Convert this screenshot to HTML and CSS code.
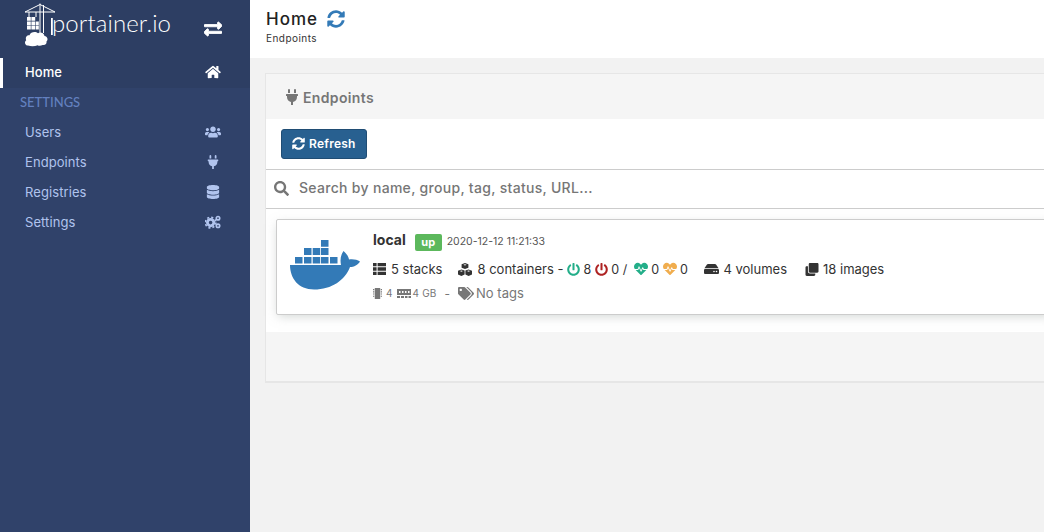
FILE: index.html
```html
<!DOCTYPE html>
<html lang="en">
<head>
<meta charset="utf-8">
<title>Portainer</title>
<link rel="stylesheet" href="styles.css">
</head>
<body>
<svg class="sprite" xmlns="http://www.w3.org/2000/svg">
  <symbol id="i-sync" viewBox="0 0 512 512"><path d="M370.72 133.28C339.458 104.008 298.888 87.962 255.848 88c-77.458.068-144.328 53.178-162.791 126.85-1.344 5.363-6.122 9.15-11.651 9.15H24.103c-7.498 0-13.194-6.807-11.807-14.176C33.933 94.924 134.813 8 256 8c66.448 0 126.791 26.136 171.315 68.685L463.03 40.97C478.149 25.851 504 36.559 504 57.941V192c0 13.255-10.745 24-24 24H345.941c-21.382 0-32.09-25.851-16.971-40.971l41.75-41.749zM32 296h134.059c21.382 0 32.09 25.851 16.971 40.971l-41.75 41.75c31.262 29.273 71.835 45.319 114.876 45.28 77.418-.07 144.315-53.144 162.787-126.849 1.344-5.363 6.122-9.15 11.651-9.15h57.304c7.498 0 13.194 6.807 11.807 14.176C478.067 417.076 377.187 504 256 504c-66.448 0-126.791-26.136-171.315-68.685L48.97 471.03C33.851 486.149 8 475.441 8 454.059V320c0-13.255 10.745-24 24-24z"/></symbol>
  <symbol id="i-search" viewBox="0 0 512 512"><path d="M505 442.7L405.3 343c-4.5-4.5-10.6-7-17-7H372c27.6-35.3 44-79.7 44-128C416 93.1 322.9 0 208 0S0 93.1 0 208s93.1 208 208 208c48.3 0 92.7-16.4 128-44v16.3c0 6.4 2.5 12.5 7 17l99.7 99.7c9.4 9.4 24.6 9.4 33.9 0l28.3-28.3c9.4-9.4 9.4-24.6.1-34zM208 336c-70.7 0-128-57.2-128-128 0-70.7 57.2-128 128-128 70.7 0 128 57.2 128 128 0 70.7-57.2 128-128 128z"/></symbol>
  <symbol id="i-home" viewBox="0 0 576 512"><path d="M280.37 148.26L96 300.11V464a16 16 0 0 0 16 16l112.06-.29a16 16 0 0 0 15.92-16V368a16 16 0 0 1 16-16h64a16 16 0 0 1 16 16v95.64a16 16 0 0 0 16 16.05L464 480a16 16 0 0 0 16-16V300L295.67 148.26a12.19 12.19 0 0 0-15.3 0zM571.6 251.47L488 182.56V44.05a12 12 0 0 0-12-12h-56a12 12 0 0 0-12 12v72.61L318.47 43a48 48 0 0 0-61 0L4.34 251.47a12 12 0 0 0-1.6 16.9l25.5 31A12 12 0 0 0 45.15 301l235.22-193.74a12.19 12.19 0 0 1 15.3 0L530.9 301a12 12 0 0 0 16.9-1.6l25.5-31a12 12 0 0 0-1.7-16.93z"/></symbol>
  <symbol id="i-plug" viewBox="0 0 384 512"><path d="M320,32a32,32,0,0,0-64,0v96h64Zm48,128H16A16,16,0,0,0,0,176v32a16,16,0,0,0,16,16H32v32A160.07,160.07,0,0,0,160,412.8V512h64V412.8A160.07,160.07,0,0,0,352,256V224h16a16,16,0,0,0,16-16V176A16,16,0,0,0,368,160ZM128,32a32,32,0,0,0-64,0v96h64Z"/></symbol>
  <symbol id="i-db" viewBox="0 0 448 512"><path d="M448 73.143v45.714C448 159.143 347.667 192 224 192S0 159.143 0 118.857V73.143C0 32.857 100.333 0 224 0s224 32.857 224 73.143zM448 176v102.857C448 319.143 347.667 352 224 352S0 319.143 0 278.857V176c48.125 33.143 136.208 48.572 224 48.572S399.874 209.143 448 176zm0 160v102.857C448 479.143 347.667 512 224 512S0 479.143 0 438.857V336c48.125 33.143 136.208 48.572 224 48.572S399.874 369.143 448 336z"/></symbol>
  <symbol id="i-users" viewBox="0 0 640 512"><path d="M96 224c35.3 0 64-28.7 64-64s-28.7-64-64-64-64 28.7-64 64 28.7 64 64 64zm448 0c35.3 0 64-28.7 64-64s-28.7-64-64-64-64 28.7-64 64 28.7 64 64 64zm32 32h-64c-17.6 0-33.5 7.1-45.1 18.6 40.3 22.1 68.9 62 75.1 109.4h66c17.7 0 32-14.3 32-32v-32c0-35.3-28.7-64-64-64zm-256 0c61.9 0 112-50.1 112-112S381.9 32 320 32 208 82.1 208 144s50.1 112 112 112zm76.8 32h-8.3c-20.8 10-43.9 16-68.5 16s-47.6-6-68.5-16h-8.3C179.6 288 128 339.6 128 403.2V432c0 26.5 21.5 48 48 48h288c26.5 0 48-21.5 48-48v-28.8c0-63.6-51.6-115.2-115.2-115.2zm-223.7-13.4C161.5 263.1 145.6 256 128 256H64c-35.3 0-64 28.7-64 64v32c0 17.7 14.3 32 32 32h65.9c6.3-47.4 34.9-87.3 75.2-109.4z"/></symbol>
  <symbol id="i-exchange" viewBox="0 0 512 512"><path d="M0 168v-16c0-13.255 10.745-24 24-24h360V80c0-21.367 25.899-32.042 40.971-16.971l80 80c9.372 9.373 9.372 24.569 0 33.941l-80 80C409.956 271.982 384 261.456 384 240v-48H24c-13.255 0-24-10.745-24-24zm488 152H128v-48c0-21.314-25.862-32.08-40.971-16.971l-80 80c-9.372 9.373-9.372 24.569 0 33.941l80 80C102.057 463.997 128 453.437 128 432v-48h360c13.255 0 24-10.745 24-24v-16c0-13.255-10.745-24-24-24z"/></symbol>
  <symbol id="i-cogs" viewBox="0 0 16 14">
    <circle cx="5.6" cy="7.6" r="3.2" fill="none" stroke="currentColor" stroke-width="2.800"/>
    <circle cx="5.6" cy="7.6" r="5.3" fill="none" stroke="currentColor" stroke-width="1.600" stroke-dasharray="2.100 2.060"/>
    <circle cx="13" cy="3.2" r="1.700" fill="none" stroke="currentColor" stroke-width="1.700"/>
    <circle cx="13" cy="10.800" r="1.700" fill="none" stroke="currentColor" stroke-width="1.700"/>
  </symbol>
  <symbol id="i-list" viewBox="0 0 13 12"><path d="M0 0h3.6v3.3H0zM4.6 0H13v3.3H4.6zM0 4.3h3.6v3.4H0zM4.6 4.3H13v3.4H4.6zM0 8.7h3.6V12H0zM4.6 8.7H13V12H4.6z"/></symbol>
  <symbol id="i-cubes" viewBox="0 0 14 13"><path d="M7 0l3.4 1.3v3.5L7 6.1 3.6 4.8V1.3zM7 1.2L5.4 1.8 7 2.4l1.6-.6zM3.4 6.4l3.2 1.2v3.9l-3.2 1.4L0 11.5V7.700zM3.4 7.500l-1.6.6 1.6.6 1.6-.6zM10.600 6.400L14 7.700v3.800l-3.400 1.400-3.200-1.400V7.600zM10.600 7.500L9 8.100l1.600.6 1.600-.6z"/></symbol>
  <symbol id="i-power" viewBox="0 0 512 512"><path d="M400 54.1c63 45 104 118.6 104 201.9 0 136.8-110.8 247.7-247.5 248C120 504.3 8.2 393 8 256.4 7.9 173.1 48.9 99.3 111.8 54.2c11.7-8.3 28-4.8 35 7.7L162.6 90c5.9 10.5 3.1 23.8-6.6 31-41.5 30.8-68 79.6-68 134.9-.1 92.3 74.5 168.1 168 168.1 91.6 0 168.6-74.2 168-169.1-.3-51.8-24.7-101.8-68.1-134-9.7-7.2-12.4-20.5-6.5-30.9l15.8-28.1c7-12.4 23.2-16.1 34.8-7.8zM296 264V24c0-13.3-10.7-24-24-24h-32c-13.3 0-24 10.7-24 24v240c0 13.3 10.7 24 24 24h32c13.3 0 24-10.7 24-24z"/></symbol>
  <symbol id="i-heart" viewBox="0 0 512 512"><path d="M320.2 243.8l-49.7 99.4c-6 12.1-23.4 11.7-28.9-.6l-56.9-126.3-30 71.7H60.6l182.5 186.5c7.1 7.3 18.6 7.3 25.7 0L451.4 288H342.3l-22.1-44.2zM473.7 73.9l-2.4-2.5c-51.5-52.6-135.8-52.6-187.4 0L256 100l-27.9-28.5c-51.5-52.7-135.9-52.7-187.4 0l-2.4 2.4C-10.4 123.7-12.5 203 31 256h102.4l35.9-86.2c5.4-12.9 23.6-13.2 29.4-.4l58.2 129.3 49-97.9c5.9-11.8 22.7-11.8 28.6 0l27.6 55.2H481c43.5-53 41.4-132.3-7.3-182.1z"/></symbol>
  <symbol id="i-hdd" viewBox="0 0 576 512"><path d="M576 304v96c0 26.51-21.49 48-48 48H48c-26.51 0-48-21.49-48-48v-96c0-26.51 21.49-48 48-48h480c26.51 0 48 21.49 48 48zm-48-80a79.557 79.557 0 0 1 30.777 6.165L462.25 85.374A48.003 48.003 0 0 0 422.311 64H153.689a48 48 0 0 0-39.938 21.374L17.223 230.165A79.557 79.557 0 0 1 48 224h480zm-48 96c-17.673 0-32 14.327-32 32s14.327 32 32 32 32-14.327 32-32-14.327-32-32-32zm-96 0c-17.673 0-32 14.327-32 32s14.327 32 32 32 32-14.327 32-32-14.327-32-32-32z"/></symbol>
  <symbol id="i-clone" viewBox="0 0 512 512"><path d="M464 0c26.51 0 48 21.49 48 48v288c0 26.51-21.49 48-48 48H176c-26.51 0-48-21.49-48-48V48c0-26.51 21.49-48 48-48h288M176 416c-44.112 0-80-35.888-80-80V128H48c-26.51 0-48 21.49-48 48v288c0 26.51 21.49 48 48 48h288c26.51 0 48-21.49 48-48v-48H176z"/></symbol>
  <symbol id="i-tags" viewBox="0 0 640 512"><path d="M497.941 225.941L286.059 14.059A48 48 0 0 0 252.118 0H48C21.49 0 0 21.49 0 48v204.118a48 48 0 0 0 14.059 33.941l211.882 211.882c18.744 18.745 49.136 18.746 67.882 0l204.118-204.118c18.745-18.745 18.745-49.137 0-67.882zM112 160c-26.51 0-48-21.49-48-48s21.49-48 48-48 48 21.49 48 48-21.49 48-48 48zm513.941 133.823L421.823 497.941c-18.745 18.745-49.137 18.745-67.882 0l-.36-.36L527.64 323.522c16.999-16.999 26.36-39.6 26.36-63.64s-9.362-46.641-26.36-63.64L331.397 0h48.721a48 48 0 0 1 33.941 14.059l211.882 211.882c18.745 18.745 18.745 49.137 0 67.882z"/></symbol>
  <symbol id="i-chip" viewBox="0 0 10 12"><path d="M2 0h6v12H2zM0 1h1.4v1H0zM0 3h1.4v1H0zM0 5h1.4v1H0zM0 7h1.4v1H0zM0 9h1.4v1H0zM8.6 1H10v1H8.6zM8.6 3H10v1H8.6zM8.6 5H10v1H8.6zM8.6 7H10v1H8.6zM8.6 9H10v1H8.6z"/></symbol>
  <symbol id="i-mem" viewBox="0 0 14 9"><path d="M0 0h14v6H0zM0 7h3v2H0zM4 7h3v2H4zM8 7h2.500v2H8zM11.500 7H14v2h-2.500z"/><path fill="#fff" d="M2 2h1.500v2H2zM5 2h1.500v2H5zM8 2h1.500v2H8zM11 2h1.500v2H11z"/></symbol>
</svg>

<div class="app">
  <aside class="sidebar">
    <div class="top">
      <div class="brand">
        <div class="logo">
          <svg class="logo-mark" viewBox="0 0 30 46" aria-hidden="true">
            <path class="logo-line" d="M0 12L15 4.500L30 12M0 12H30M15 3.500V33M18.500 5V33"/>
            <path class="logo-line" d="M4 12V17M11 12V17"/>
            <path class="logo-fill" d="M2 17h3.800v3.800H2zM6.400 17h3.800v3.800H6.400zM2 21.400h3.800v3.800H2zM6.400 21.400h3.800v3.800H6.400zM10.800 21.400h3v3.800h-3zM2 25.800h3.800v3.800H2zM6.400 25.800h3.800v3.800H6.400zM10.800 25.800h3v3.800h-3z"/>
            <path class="logo-fill" d="M26 18h1.800v17H26z"/>
            <path class="logo-fill" d="M3 45.500c-3 0-4-3.500-1.800-5.300-1.200-3 .8-5.600 3.300-4.900 1-3.300 6-4.300 8.500-2 2-1.500 6-.5 6.500 2.700 3 .2 4 4 2 5.500.5 2.300-1.500 4.100-3.800 3.500-2 1-4 1-5 .2-3 1.200-6.700 1.200-9.700.3z"/>
          </svg>
          <span class="logo-text">portainer.io</span>
        </div>
        <svg class="icon toggle"><use href="#i-exchange"/></svg>
      </div>
      <a class="nav-item active"><span>Home</span><svg class="icon nav-icon home-icon"><use href="#i-home"/></svg></a>
    </div>
    <div class="nav-title">SETTINGS</div>
    <a class="nav-item"><span>Users</span><svg class="icon nav-icon"><use href="#i-users"/></svg></a>
    <a class="nav-item"><span>Endpoints</span><svg class="icon nav-icon"><use href="#i-plug"/></svg></a>
    <a class="nav-item"><span>Registries</span><svg class="icon nav-icon"><use href="#i-db"/></svg></a>
    <a class="nav-item"><span>Settings</span><svg class="icon nav-icon"><use href="#i-cogs"/></svg></a>
  </aside>

  <main class="main">
    <header class="page-header">
      <div class="page-title">Home <svg class="icon title-sync"><use href="#i-sync"/></svg></div>
      <div class="breadcrumb">Endpoints</div>
    </header>

    <section class="widget">
      <div class="widget-head"><svg class="icon head-plug"><use href="#i-plug"/></svg>Endpoints</div>
      <div class="widget-body">
        <div class="toolbar"><button class="btn"><svg class="icon btn-sync"><use href="#i-sync"/></svg>Refresh</button></div>
        <div class="searchbar"><svg class="icon search-icon"><use href="#i-search"/></svg><span>Search by name, group, tag, status, URL...</span></div>
        <div class="list">
          <article class="card">
            <svg class="whale" viewBox="0 0 70 50" aria-hidden="true">
              <path d="M5 17h7.500v6.500H5zM14 17h7.500v6.500H14zM22.700 17h7.500v6.500h-7.500zM31 17h7.500v6.500H31zM40 17h7.500v6.500H40zM14 8h7.500v7h-7.500zM22.700 8h7.500v7h-7.500zM31 8h7.500v7H31zM31 0h7.500v6.800H31z"/>
              <path d="M0 25H51C50 20 50.500 15 53.500 11C56.500 13.500 58.500 16.500 59 19.500C63 19 67 19.500 70 21.500C68 25 64 27 60 27C55 40 42 49.500 24 49.500C8 49.500 0 38 0 25Z"/>
            </svg>
            <div class="card-info">
              <div class="row row-name"><span class="name">local</span><span class="badge">up</span><span class="date">2020-12-12 11:21:33</span></div>
              <div class="row row-stats">
                <span class="stat s-stacks"><svg class="icon ic13"><use href="#i-list"/></svg>5 stacks</span>
                <span class="stat s-cont"><svg class="icon ic14"><use href="#i-cubes"/></svg>8 containers -</span>
                <span class="stat s-tight"><svg class="icon ic-power green"><use href="#i-power"/></svg>8</span>
                <span class="stat s-tight"><svg class="icon ic-power red"><use href="#i-power"/></svg>0 /</span>
                <span class="stat s-tight s-heart"><svg class="icon ic-heart green"><use href="#i-heart"/></svg>0</span>
                <span class="stat s-tight"><svg class="icon ic-heart orange"><use href="#i-heart"/></svg>0</span>
                <span class="stat s-vol"><svg class="icon ic15"><use href="#i-hdd"/></svg>4 volumes</span>
                <span class="stat s-img"><svg class="icon ic14"><use href="#i-clone"/></svg>18 images</span>
              </div>
              <div class="row row-meta">
                <svg class="icon ic-chip"><use href="#i-chip"/></svg><span class="small cpu">4</span>
                <svg class="icon ic-mem"><use href="#i-mem"/></svg><span class="small gb">4 GB</span>
                <span class="dash">-</span>
                <svg class="icon ic-tags"><use href="#i-tags"/></svg><span class="tags">No tags</span>
              </div>
            </div>
          </article>
        </div>
      </div>
      <div class="widget-foot"></div>
    </section>
  </main>
</div>
</body>
</html>
```

FILE: styles.css
```css
* { box-sizing: border-box; }
html, body { margin: 0; height: 100%; overflow: hidden; }
body { font-family: Inter, "Open Sans", "Liberation Sans", sans-serif; color: #333; background: #f2f2f2; }
.sprite { display: none; }
.icon { fill: currentColor; flex: none; display: block; }

.app { display: flex; height: 532px; }

.sidebar { width: 250px; flex: none; background: #30426a; color: #b1c4ee; }
.top { background: #2d3e63; }
.brand { height: 58px; display: flex; align-items: flex-start; padding-left: 25px; }
.logo { display: flex; align-items: flex-start; color: #fff; width: 179px; }
.logo-mark { width: 30px; height: 46px; flex: none; overflow: visible; }
.logo-line { fill: none; stroke: #fff; stroke-width: 1; }
.logo-fill { fill: #fff; }
.logo-text { font-family: Lato, sans-serif; font-weight: 300; font-size: 24px; line-height: 30px; margin: 8px 0 0 -3px; letter-spacing: .1px; }
.toggle { width: 18px; height: 18px; color: #fff; margin-top: 20px; stroke: #fff; stroke-width: 24; }

.nav-item { display: flex; align-items: center; justify-content: space-between; height: 30px; padding: 0 29px 2px 25px; font-size: 13px; letter-spacing: .08px; }
.nav-item.active { color: #fff; font-weight: 500; box-shadow: inset 3px 0 0 #fff; }
.nav-icon { width: 16px; height: 14px; }
.home-icon { color: #fff; }
.nav-title { height: 30px; line-height: 28px; padding-left: 20px; font-family: Lato, sans-serif; font-size: 13px; color: #6380bf; font-weight: 500; }

.main { flex: 1; min-width: 0; overflow: hidden; }
.page-header { height: 58px; background: #fff; padding: 9px 0 0 16px; }
.page-title { display: flex; align-items: center; gap: 9px; font-size: 17px; font-weight: 500; line-height: 20px; color: #222; letter-spacing: 1px; }
.title-sync { width: 18px; height: 18px; color: #337ab7; }
.breadcrumb { font-size: 10px; line-height: 14px; margin-top: 2px; letter-spacing: .45px; color: #333; }

.widget { margin: 15px -20px 0 15px; background: #fff; border: 1px solid #e6e6e6; border-bottom-width: 2px; }
.widget-head { height: 45px; padding: 2px 0 0 20px; background: #f5f5f5; display: flex; align-items: center; gap: 5px; font-size: 14px; font-weight: 600; color: #767676; letter-spacing: .35px; }
.head-plug { width: 12px; height: 16px; margin-top: -2px; }
.toolbar { height: 50px; padding: 10px 15px; }
.btn { display: flex; align-items: center; gap: 4px; height: 30px; width: 86px; padding: 0 0 2px 10px; background: #286090; border: 1px solid #204d74; border-radius: 3px; color: #fff; font: 600 12px Inter, sans-serif; letter-spacing: .25px; }
.btn-sync { width: 13px; height: 13px; }
.searchbar { height: 40px; padding: 0 0 3px 8px; border-top: 1px solid #ccc; border-bottom: 1px solid #ccc; display: flex; align-items: center; gap: 10px; color: #767676; font-size: 14px; font-weight: 500; letter-spacing: .3px; }
.search-icon { width: 15px; height: 15px; margin-top: 1px; }

.list { padding: 10px 10px 17px; }
.card { height: 96px; border: 1px solid #ccc; border-radius: 2px; box-shadow: 0 3px 10px -2px rgba(161,170,166,.5); display: flex; background: #fff; padding: 20px 0 0 13px; }
.whale { width: 70px; height: 50px; fill: #337ab7; flex: none; }
.card-info { margin: -9px 0 0 13px; }
.row { display: flex; align-items: center; }
.row-name { height: 18px; }
.name { font-size: 14px; font-weight: 700; color: #333; margin-top: -2px; }
.badge { margin: 4px 0 0 9px; width: 27px; height: 17px; background: #5cb85c; color: #fff; border-radius: 2px; font-size: 11px; font-weight: 700; text-align: center; line-height: 16px; }
.date { margin: 2px 0 0 5px; font-size: 10.500px; color: #555; letter-spacing: 0; }
.row-stats { margin-top: 11px; height: 18px; font-size: 13px; color: #333; }
.stat { display: flex; align-items: center; gap: 5px; white-space: nowrap; }
.s-cont { margin-left: 16px; }
.s-tight { margin-left: 3.500px; gap: 3.500px; font-size: 12.500px; }
.s-tight.s-heart { margin-left: 6.500px; }
.s-vol { margin-left: 16.500px; gap: 4px; }
.s-img { margin-left: 18px; gap: 4px; }
.ic13 { width: 13px; height: 12px; }
.ic14 { width: 14px; height: 13px; }
.ic15 { width: 15px; height: 14px; }
.ic-power { width: 13px; height: 13px; }
.ic-heart { width: 14px; height: 14px; }
.green { color: #23ae89; }
.red { color: #ae2323; }
.orange { color: #f0ad4e; }
.row-meta { margin-top: 6px; height: 18px; color: #777; }
.ic-chip { width: 9px; height: 11px; }
.ic-mem { width: 14px; height: 9px; margin-left: 5px; }
.small { font-size: 10px; }
.cpu { margin-left: 4px; }
.gb { margin-left: 1px; letter-spacing: .2px; }
.dash { margin: 0 8px; font-size: 12px; }
.ic-tags { width: 16px; height: 13px; }
.tags { font-size: 13px; margin-left: 2px; }

.widget-foot { height: 49px; background: #f5f5f5; }
```
